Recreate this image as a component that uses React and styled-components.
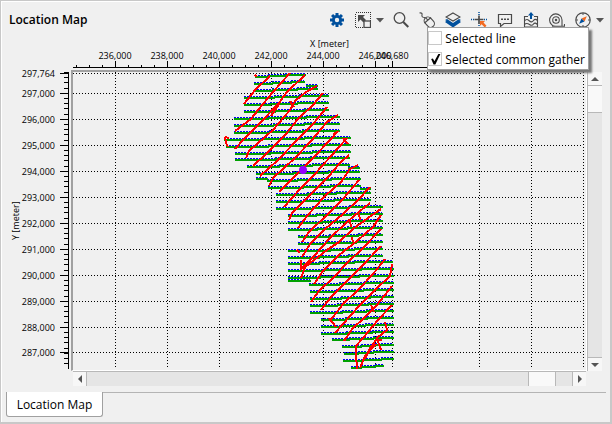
// Importing Modules
import React, { useState } from "react";
import styled, { createGlobalStyle } from "styled-components";

const BLUE = "#00509d";
const INK = "#4a4a4a";
const ORANGE = "#f26a21";

// Axis ticks, in pixels of the plot
const xTicks = [
  { pos: 42, label: "236,000" },
  { pos: 94, label: "238,000" },
  { pos: 146, label: "240,000" },
  { pos: 198, label: "242,000" },
  { pos: 250, label: "244,000" },
  { pos: 302, label: "246,000" },
  { pos: 319, label: "246,680" },
];
const xMinor = Array.from({ length: 25 }, (_, i) => 3 + i * 13);
const xGrid = [...xTicks.map((t) => t.pos), 354, 406, 458, 510];

const yTicks = [
  { pos: 1, label: "297,764" },
  { pos: 21, label: "297,000" },
  { pos: 47, label: "296,000" },
  { pos: 73, label: "295,000" },
  { pos: 99, label: "294,000" },
  { pos: 125, label: "293,000" },
  { pos: 151, label: "292,000" },
  { pos: 177, label: "291,000" },
  { pos: 203, label: "290,000" },
  { pos: 229, label: "289,000" },
  { pos: 255, label: "288,000" },
  { pos: 280, label: "287,000" },
];
const yMinor = Array.from({ length: 57 }, (_, i) => Math.round(i * 5.2));

// Receiver rows: y, first x, last x
const rows = [
  [3, 182, 232],
  [10, 181, 231],
  [17, 181, 244],
  [24, 171, 255],
  [31, 171, 255],
  [38, 171, 255],
  [45, 161, 266],
  [52, 161, 266],
  [59, 161, 266],
  [66, 151, 277],
  [73, 153, 277],
  [80, 162, 277],
  [86, 162, 276],
  [93, 174, 276],
  [100, 183, 286],
  [107, 194, 287],
  [114, 195, 287],
  [121, 203, 297],
  [128, 203, 297],
  [135, 203, 309],
  [142, 215, 309],
  [149, 215, 309],
  [156, 215, 309],
  [163, 225, 309],
  [170, 225, 309],
  [177, 225, 309],
  [184, 215, 309],
  [190, 215, 319],
  [197, 215, 320],
  [204, 215, 320],
  [211, 236, 320],
  [218, 237, 320],
  [225, 237, 320],
  [232, 237, 320],
  [239, 237, 320],
  [246, 248, 320],
  [253, 248, 320],
  [260, 248, 320],
  [266, 259, 320],
  [273, 269, 320],
  [280, 271, 320],
  [287, 270, 320],
  [294, 278, 310],
];
const shortRows = [
  [13, 233, 244],
  [95, 275, 286],
  [106, 183, 194],
  [116, 287, 297],
  [178, 215, 226],
  [208, 215, 237],
];

// Every row is shot in three swaths, each one a pixel above the last
const swaths = [
  ...rows.flatMap(([y, x0, x1], i) => {
    const third = Math.round((x1 - x0) / 3);
    const a = x0 + third + ((i * 5) % 9) - 4;
    const b = x0 + third * 2 + ((i * 7) % 9) - 4;
    return [
      [y + 1, x0, a],
      [y, a, b],
      [y - 1, b, x1],
    ];
  }),
  ...shortRows,
];

// Source lines: corner points from the lower left up to the right
const sources = [
  [[182, 3], [184, 5]],
  [[171, 32], [182, 18], [197, 4]],
  [[162, 59], [178, 47], [185, 38], [200, 20], [217, 1]],
  [[162, 77], [170, 68], [188, 50], [206, 31], [214, 20], [232, 3]],
  [[152, 65], [153, 71], [155, 75]],
  [[152, 65], [156, 66]],
  [[173, 86], [176, 79], [200, 58], [217, 38], [222, 29], [233, 20], [244, 14]],
  [[198, 44], [206, 32]],
  [[217, 29], [221, 35]],
  [[180, 94], [192, 83], [213, 62], [225, 47], [240, 33], [250, 21]],
  [[187, 104], [205, 88], [225, 67], [240, 52], [254, 35]],
  [[196, 114], [200, 106], [222, 86], [238, 69], [254, 50], [265, 43]],
  [[206, 120], [224, 102], [242, 84], [256, 69], [265, 59]],
  [[211, 135], [227, 117], [241, 103], [258, 84], [274, 66]],
  [[260, 66], [262, 60]],
  [[270, 66], [275, 72]],
  [[216, 148], [219, 141], [238, 122], [256, 104], [266, 92], [276, 83]],
  [[225, 156], [234, 144], [252, 124], [268, 110], [277, 97], [285, 93]],
  [[229, 170], [236, 160], [254, 143], [270, 127], [286, 108]],
  [[229, 185], [237, 172], [252, 157], [270, 142], [285, 128], [297, 115]],
  [[224, 178], [227, 181]],
  [[228, 188], [228, 197], [241, 184], [257, 166], [274, 150], [287, 139], [297, 131]],
  [[277, 148], [278, 155]],
  [[286, 142], [287, 148]],
  [[228, 206], [232, 195], [254, 178], [266, 170], [280, 157], [295, 146], [308, 137]],
  [[279, 165], [280, 170]],
  [[241, 212], [250, 199], [266, 183], [284, 169], [300, 155], [308, 143]],
  [[238, 230], [246, 219], [262, 204], [274, 191], [290, 176], [308, 157]],
  [[248, 238], [258, 225], [273, 210], [288, 195], [308, 174]],
  [[257, 249], [270, 232], [286, 217], [300, 202], [312, 187]],
  [[256, 246], [263, 255]],
  [[262, 261], [270, 252], [286, 234], [302, 218], [317, 204], [319, 192]],
  [[271, 269], [280, 256], [290, 247], [304, 233], [319, 214]],
  [[298, 233], [301, 240]],
  [[283, 287], [283, 274], [290, 266], [305, 248], [319, 233]],
  [[304, 267], [308, 278]],
  [[302, 268], [309, 268]],
  [[284, 297], [283, 283]],
  [[292, 287], [296, 278], [305, 265], [314, 258], [312, 250]],
  [[287, 296], [292, 284], [303, 272]],
];

const toPoints = (corners) => corners.map((c) => c.join(",")).join(" ");

const GearIcon = () => (
  <Icon viewBox="0 0 16 16">
    <g fill={BLUE}>
      {[0, 45, 90, 135].map((a) => (
        <rect
          key={a}
          x="6.5"
          y="1"
          width="3"
          height="14"
          transform={`rotate(${a} 8 8)`}
        />
      ))}
      <circle cx="8" cy="8" r="5" />
    </g>
    <circle cx="8" cy="8" r="2.2" fill="#f0f0f0" />
  </Icon>
);

const FitIcon = () => (
  <Icon viewBox="0 0 16 16">
    <rect
      x="0.5"
      y="0.5"
      width="15"
      height="15"
      fill="none"
      stroke="#333"
      strokeDasharray="1 1"
      shapeRendering="crispEdges"
    />
    <path d="M3 3h7L8 5l3 3-2.5 2.5-3-3L3 10z" fill={INK} />
    <rect
      x="9"
      y="9"
      width="6.5"
      height="6.5"
      fill="#f0f0f0"
      stroke={INK}
      strokeWidth="1.3"
    />
  </Icon>
);

const SearchIcon = () => (
  <Icon viewBox="0 0 16 16" fill="none" stroke={INK}>
    <circle cx="6.5" cy="6" r="5.3" strokeWidth="1.3" />
    <path d="M10.3 10l5 5" strokeWidth="2" />
  </Icon>
);

const MouseIcon = () => (
  <Icon viewBox="0 0 16 16" fill="none" stroke={INK} strokeWidth="1.1">
    <path d="M0.5 1c2-.5 3 .5 2.5 2s.5 2.5 3 2.5" />
    <rect
      x="6.5"
      y="4.5"
      width="7.5"
      height="11.5"
      rx="3.7"
      transform="rotate(-42 10.2 10.2)"
    />
    <path d="M5.5 11L12 5.5M6.5 5.5L9 8.3" />
  </Icon>
);

const LayersIcon = () => (
  <Icon viewBox="0 0 16 16">
    <path d="M0 10l2-1.500L8 12l6-3.500 2 1.500-8 5.500z" fill={BLUE} />
    <path d="M0 8l2-1 6 4 6-4 2 1-8 5z" fill={BLUE} />
    <path
      d="M8 1l7 4-7 4-7-4z"
      fill="#f0f0f0"
      stroke={INK}
      strokeWidth="1.2"
    />
  </Icon>
);

const PickIcon = () => (
  <Icon viewBox="0 0 16 16">
    <path
      d="M8 0v3M8 13v2M0 7.5h3M13 7.5h3"
      stroke={BLUE}
      strokeWidth="1.5"
      strokeDasharray="1 1"
    />
    <path d="M8 3.5V12M3.5 7.5h9" stroke={INK} strokeWidth="1.7" />
    <path
      d="M9 9h5l-1.5 1.5 3 3.3-1.7 1.7-3.2-3.2L9 14z"
      fill={ORANGE}
    />
  </Icon>
);

const CommentIcon = () => (
  <Icon viewBox="0 0 16 16">
    <path
      d="M1.5 2.5h13v9H7l-3.5 3v-3h-2z"
      fill="none"
      stroke={INK}
      strokeWidth="1.2"
    />
    <path d="M4 6.5h2V8H4zM7 6.5h2V8H7zM10 6.5h2V8h-2z" fill={INK} />
  </Icon>
);

const ExportMapIcon = () => (
  <Icon viewBox="0 0 16 16" fill="none">
    <path
      d="M5 4.5H1.5V15h13V4.5H11M1.5 9c2-2.5 3.5-1.5 5 0s3 1 4-.5 2.500-1.500 4 0M1.500 12.500c2-2 3.500-1 5 0s3 1 4-.5 2.500-1 4 .5"
      stroke={INK}
      strokeWidth="1.1"
    />
    <path d="M8 0l3 3.5H9V7H7V3.5H5z" fill={BLUE} />
  </Icon>
);

const TapeIcon = () => (
  <Icon viewBox="0 0 16 16" fill="none" stroke={INK} strokeWidth="1.1">
    <path d="M7 14.3A6.2 6.2 0 1 1 13 8v6.3h2.5V12M3 14.3h10" />
    <circle cx="7" cy="8" r="3.3" />
    <circle cx="7" cy="8" r="0.7" />
  </Icon>
);

const CompassIcon = () => (
  <Icon viewBox="0 0 16 16">
    <circle cx="8" cy="8" r="7.2" fill="none" stroke={INK} strokeWidth="1.2" />
    <path d="M8 1v2M8 13v2M1 8h2M13 8h2" stroke={INK} />
    <path d="M11.8 4.2L9.5 9.5l-3-3z" fill={ORANGE} />
    <path d="M4.2 11.8L6.5 6.5l3 3z" fill={BLUE} />
  </Icon>
);

const Caret = ({ label }) => (
  <CaretButton aria-label={label}>
    <svg width="8" height="5" viewBox="0 0 8 5">
      <path d="M0 0h8L4 4.5z" fill="#555" />
    </svg>
  </CaretButton>
);

const Arrow = ({ angle }) => (
  <svg width="8" height="8" viewBox="0 0 8 8">
    <path d="M0 6l4-4 4 4z" fill="#555" transform={`rotate(${angle} 4 4)`} />
  </svg>
);

const SurveyPlot = () => (
  <Chart role="img" aria-label="Survey map" shapeRendering="crispEdges">
    <g stroke="black" strokeDasharray="1 2">
      {xGrid.map((x) => (
        <line key={x} x1={x + 0.5} x2={x + 0.5} y1="0" y2="99%" />
      ))}
      {yTicks.map((t) => (
        <line key={t.pos} x1="0" x2="510" y1={t.pos + 0.5} y2={t.pos + 0.5} />
      ))}
    </g>
    <g stroke="#0000ff" strokeWidth="2" strokeDasharray="2 1">
      {swaths.map(([y, x0, x1], i) => (
        <line key={i} x1={x0} x2={x1} y1={y} y2={y} />
      ))}
    </g>
    <g stroke="#00a000" strokeWidth="2">
      {swaths.map(([y, x0, x1], i) => (
        <line key={i} x1={x0} x2={x1 + 1} y1={y + 1} y2={y + 1} />
      ))}
    </g>
    <g stroke="#ff0000" strokeWidth="2" fill="none">
      {sources.map((corners, i) => (
        <polyline key={i} points={toPoints(corners)} />
      ))}
    </g>
    <circle
      cx="230"
      cy="98"
      r="4"
      fill="#9600ff"
      shapeRendering="geometricPrecision"
    />
  </Chart>
);

export default function App() {
  const [line, setLine] = useState(false);
  const [gather, setGather] = useState(true);

  return (
    <>
      <GlobalStyle />
      <Window>
        <Toolbar>
          <Title>Location Map</Title>
          <Tools>
            <Tool aria-label="Settings"><GearIcon /></Tool>
            <Tool aria-label="Fit to view"><FitIcon /></Tool>
            <Caret label="Fit options" />
            <Tool aria-label="Zoom"><SearchIcon /></Tool>
            <Tool aria-label="Mouse mode"><MouseIcon /></Tool>
            <Tool aria-label="Layers"><LayersIcon /></Tool>
            <Tool aria-label="Pick"><PickIcon /></Tool>
            <Tool aria-label="Comment"><CommentIcon /></Tool>
            <Tool aria-label="Export map"><ExportMapIcon /></Tool>
            <Tool aria-label="Measure"><TapeIcon /></Tool>
            <Tool aria-label="Orientation"><CompassIcon /></Tool>
            <Caret label="Orientation options" />
          </Tools>
          <Menu>
            <MenuItem>
              <CheckBox
                type="checkbox"
                checked={line}
                onChange={() => setLine(!line)}
              />
              Selected line
            </MenuItem>
            <MenuItem>
              <CheckBox
                type="checkbox"
                checked={gather}
                onChange={() => setGather(!gather)}
              />
              Selected common gather
            </MenuItem>
          </Menu>
        </Toolbar>

        <MapArea>
          <XAxis>
            <AxisTitle>X [meter]</AxisTitle>
            <XScale>
              <g shapeRendering="crispEdges">
                <rect x="0" y="17" width="100%" height="1" />
                {xTicks.map((t) => (
                  <rect key={t.pos} x={t.pos} y="11" width="1" height="7" />
                ))}
                {xMinor.map((x) => (
                  <rect key={x} x={x} y="15" width="1" height="3" />
                ))}
              </g>
              {xTicks.map((t) => (
                <text key={t.pos} x={t.pos} y="9" textAnchor="middle">
                  {t.label}
                </text>
              ))}
            </XScale>
          </XAxis>

          <YAxis>
            <VerticalTitle>Y [meter]</VerticalTitle>
            <YScale>
              <g shapeRendering="crispEdges">
                <rect x="44" y="2" width="1" height="297" />
                {yTicks.map((t) => (
                  <rect key={t.pos} x="36" y={t.pos + 2} width="8" height="1" />
                ))}
                {yMinor.map((y) => (
                  <rect key={y} x="40" y={y + 2} width="4" height="1" />
                ))}
              </g>
              {yTicks.map((t) => (
                <text key={t.pos} x="31" y={t.pos + 6} textAnchor="end">
                  {t.label}
                </text>
              ))}
            </YScale>
          </YAxis>

          <Plot>
            <SurveyPlot />
          </Plot>

          <ScrollBar $vertical>
            <ScrollButton aria-label="Scroll up"><Arrow angle={0} /></ScrollButton>
            <Thumb />
            <Track />
            <ScrollButton aria-label="Scroll down"><Arrow angle={180} /></ScrollButton>
          </ScrollBar>

          <ScrollBar>
            <ScrollButton aria-label="Scroll left"><Arrow angle={-90} /></ScrollButton>
            <Track />
            <Thumb />
            <TrackEnd />
            <ScrollButton aria-label="Scroll right"><Arrow angle={90} /></ScrollButton>
          </ScrollBar>
        </MapArea>

        <TabBar>
          <Tab>Location Map</Tab>
          <TabLine />
        </TabBar>
      </Window>
    </>
  );
}

// Styles
const GlobalStyle = createGlobalStyle`
  * {
    box-sizing: border-box;
  }

  body {
    margin: 0;
    background: #f0f0f0;
    color: black;
    font-family: "Open Sans", "Noto Sans", sans-serif;
    font-size: 12px;
  }

  button {
    padding: 0;
    border: none;
    background: none;
    font: inherit;
    color: inherit;
  }
`;

const Window = styled.main`
  display: flex;
  flex-direction: column;
  min-height: 100vh;
  background: #f0f0f0;
  border: 1px solid #c8c8c8;
  border-right-width: 2px;
  border-bottom-width: 2px;
  box-shadow: inset 1px 1px white;
  padding: 1px 0 5px 1px;
`;

const Toolbar = styled.header`
  position: relative;
  display: flex;
  align-items: center;
  justify-content: space-between;
  height: 36px;
  padding: 0 2px 0 7px;
`;

const Title = styled.h1`
  margin: 0;
  font-size: 12px;
  font-weight: 600;
  line-height: 16px;
`;

const Tools = styled.div`
  display: flex;
`;

const Tool = styled.button`
  display: flex;
  align-items: center;
  justify-content: center;
  width: 26px;
  height: 26px;
`;

const Icon = styled.svg`
  width: 16px;
  height: 16px;
`;

const CaretButton = styled.button`
  display: flex;
  align-items: center;
  width: 12px;
  height: 26px;
`;

const Menu = styled.div`
  position: absolute;
  top: 25px;
  right: 21px;
  z-index: 2;
  display: grid;
  gap: 1px;
  background: white;
  border: 1px solid #a0a0a0;
  box-shadow: 3px 3px 2px #777;
`;

const MenuItem = styled.label`
  display: flex;
  align-items: center;
  gap: 3px;
  height: 20px;
  padding-right: 3px;
  white-space: nowrap;
`;

const CheckBox = styled.input`
  appearance: none;
  width: 14px;
  height: 14px;
  margin: 0;
  border: 1px solid #c8c8c8;
  background: white;

  &:checked::after {
    content: "";
    display: block;
    width: 12px;
    height: 12px;
    background: black;
    clip-path: polygon(15% 50%, 30% 45%, 42% 68%, 75% 8%, 92% 8%, 50% 95%, 35% 95%);
  }
`;

const MapArea = styled.section`
  flex: 1;
  display: grid;
  grid-template-columns: 69px 1fr 15px;
  grid-template-rows: 32px 1fr 15px;
  padding-right: 8px;
`;

const XAxis = styled.div`
  grid-column: 2;
  padding: 0 1px 0 2px;
  min-width: 0;
`;

const AxisTitle = styled.div`
  font-size: 9px;
  line-height: 12px;
  text-align: center;
`;

const XScale = styled.svg`
  display: block;
  width: 100%;
  height: 20px;
  font-size: 9px;
`;

const YAxis = styled.div`
  grid-row: 2;
  grid-column: 1;
  display: flex;
  padding-left: 8px;
`;

const VerticalTitle = styled(AxisTitle)`
  writing-mode: vertical-rl;
  transform: rotate(180deg);
`;

const YScale = styled.svg`
  width: 49px;
  height: 100%;
  margin-left: 2px;
  font-size: 9px;
  overflow: visible;
`;

const Plot = styled.div`
  grid-row: 2;
  grid-column: 2;
  display: flex;
  min-width: 0;
  min-height: 301px;
  border: 1px solid white;
  border-top: 2px solid #a0a0a0;
  border-left: 2px solid #a0a0a0;
`;

const Chart = styled.svg`
  width: 100%;
  height: auto;
`;

const ScrollBar = styled.div`
  grid-row: ${(p) => (p.$vertical ? 2 : 3)};
  grid-column: ${(p) => (p.$vertical ? 3 : 2)};
  display: flex;
  flex-direction: ${(p) => (p.$vertical ? "column" : "row")};
  gap: 1px;
  margin: ${(p) => (p.$vertical ? "2px 0 0" : "0 1px 0 2px")};
  border: solid #b8b8b8;
  border-width: ${(p) => (p.$vertical ? "0 0 0 1px" : "1px 0 0")};
  background: #b8b8b8;
`;

const ScrollButton = styled.button`
  flex: 0 0 13px;
  display: flex;
  align-items: center;
  justify-content: center;
  background: #f7f7f7;
`;

const Thumb = styled.div`
  flex: 0 0 26px;
  background: #f9f9f9;
`;

const Track = styled.div`
  flex: 1;
  background: #e5e5e5;
`;

const TrackEnd = styled(Track)`
  flex: 0 0 16px;
`;

const TabBar = styled.nav`
  display: flex;
  margin-top: 6px;
  padding: 0 4px;
`;

const Tab = styled.button`
  width: 97px;
  height: 25px;
  background: white;
  border: 1px solid #a0a0a0;
  border-top: none;
  border-radius: 0 0 3px 3px;
`;

const TabLine = styled.div`
  flex: 1;
  border-top: 1px solid #b4b4b4;
`;
